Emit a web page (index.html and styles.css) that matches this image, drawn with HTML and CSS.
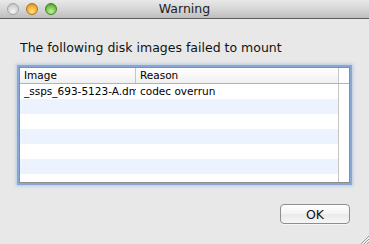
FILE: index.html
```html
<!DOCTYPE html>
<html lang="en">
<head>
    <meta charset="UTF-8">
    <title>Warning</title>
    <link rel="stylesheet" href="styles.css">
</head>
<body>
    <div class="window">
        <div class="titlebar">
            <div class="lights">
                <span class="light close"></span>
                <span class="light minimize"></span>
                <span class="light zoom"></span>
            </div>
            <div class="title">Warning</div>
        </div>

        <div class="content">
            <p class="message">The following disk images failed to mount</p>

            <div class="list-frame">
                <div class="list-row list-header">
                    <div class="cell col-image">Image</div>
                    <div class="cell col-reason">Reason</div>
                    <div class="cell col-extra"></div>
                </div>
                <div class="list-row">
                    <div class="cell col-image">_ssps_693-5123-A.dmg</div>
                    <div class="cell col-reason">codec overrun</div>
                    <div class="cell col-extra"></div>
                </div>
                <div class="list-row stripe"><div class="cell col-image"></div><div class="cell col-reason"></div><div class="cell col-extra"></div></div>
                <div class="list-row"><div class="cell col-image"></div><div class="cell col-reason"></div><div class="cell col-extra"></div></div>
                <div class="list-row stripe"><div class="cell col-image"></div><div class="cell col-reason"></div><div class="cell col-extra"></div></div>
                <div class="list-row"><div class="cell col-image"></div><div class="cell col-reason"></div><div class="cell col-extra"></div></div>
                <div class="list-row stripe"><div class="cell col-image"></div><div class="cell col-reason"></div><div class="cell col-extra"></div></div>
                <div class="list-row"><div class="cell col-image"></div><div class="cell col-reason"></div><div class="cell col-extra"></div></div>
            </div>

            <div class="actions">
                <button class="btn">OK</button>
            </div>
        </div>

        <svg class="grip" width="10" height="10" viewBox="0 0 10 10">
            <path d="M10 2 L2 10 M10 5 L5 10 M10 8 L8 10" stroke="#9a9a9a" stroke-width="1"/>
            <path d="M10 3 L3 10 M10 6 L6 10" stroke="#ffffff" stroke-width="0.8" opacity="0.7"/>
        </svg>
    </div>
</body>
</html>
```

FILE: styles.css
```css
body {
    margin: 0;
    font-family: "DejaVu Sans", "Lucida Grande", sans-serif;
    background: #e8e8e8;
}

.window {
    position: relative;
    width: 369px;
    height: 244px;
    background: #e8e8e8;
    overflow: hidden;
}

/* title bar */
.titlebar {
    position: relative;
    height: 18px;
    border-bottom: 1px solid #5e5e5e;
    background: linear-gradient(#e9e9e9, #d2d2d2 60%, #bdbdbd);
    display: flex;
    align-items: center;
    justify-content: center;
}

.lights {
    position: absolute;
    left: 7px;
    top: 3px;
    display: flex;
    gap: 7px;
}

.light {
    width: 12px;
    height: 12px;
    border-radius: 50%;
    box-sizing: border-box;
}

.light.close {
    background: radial-gradient(circle at 50% 75%, #f4f4f4, #d4d4d4 60%, #b9b9b9);
    border: 1px solid #a4a4a4;
}

.light.minimize {
    background: radial-gradient(circle at 50% 75%, #ffe28a, #f2ad2e 60%, #c9811b);
    border: 1px solid #b3741a;
}

.light.zoom {
    background: radial-gradient(circle at 50% 75%, #c5f09a, #72c049 60%, #3f8d25);
    border: 1px solid #3e8526;
}

.title {
    font-size: 12.5px;
    color: #222;
    line-height: 18px;
}

/* dialog body */
.content {
    padding: 21px 19px 0 19px;
}

.message {
    margin: 0 0 11px 1px;
    font-size: 12.5px;
    line-height: 16px;
    color: #111;
}

.list-frame {
    height: 116px;
    box-sizing: border-box;
    border: 1px solid #8d8d8d;
    background: #fff;
    overflow: hidden;
    box-shadow: 0 0 0 2px #87a8d6, 0 0 3px 3px rgba(120, 160, 215, 0.45);
}

.list-row {
    display: grid;
    grid-template-columns: 116px 203px 1fr;
    height: 15px;
    font-size: 10.5px;
    line-height: 15px;
    color: #000;
}

.list-header {
    height: 16px;
    border-bottom: 1px solid #b3b3b3;
    box-sizing: border-box;
    background: linear-gradient(#ffffff, #f0f0f0);
}

.cell {
    padding-left: 4px;
    white-space: nowrap;
    overflow: hidden;
    border-right: 1px solid #c6c6c6;
}

.list-row:not(.list-header) .col-image,
.list-row:not(.list-header) .col-reason {
    border-right: none;
}

.list-row:not(.list-header) .col-reason {
    border-right: 1px solid #c6c6c6;
}

.list-row .col-extra {
    border-right: none;
    background: #fff;
}

.list-row.stripe .col-image,
.list-row.stripe .col-reason {
    background: #edf3fe;
}

.actions {
    display: flex;
    justify-content: flex-end;
    margin-top: 21px;
}

.btn {
    width: 70px;
    height: 20px;
    padding: 0;
    font-family: "DejaVu Sans", "Lucida Grande", sans-serif;
    font-size: 12.5px;
    color: #111;
    background: linear-gradient(#ffffff, #f3f3f3 50%, #e9e9e9 51%, #f6f6f6);
    border: 1px solid #8e8e8e;
    border-radius: 4px;
    box-shadow: 0 1px 0 rgba(255, 255, 255, 0.6);
}

.grip {
    position: absolute;
    right: 0;
    bottom: 0;
}
```
